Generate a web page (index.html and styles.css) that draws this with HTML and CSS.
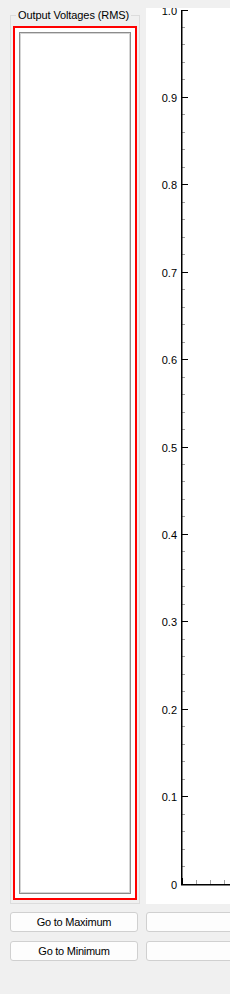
FILE: index.html
```html
<!DOCTYPE html>
<html lang="en">
  <head>
    <meta charset="UTF-8" />
    <meta name="viewport" content="width=device-width, initial-scale=1.0" />
    <title>Output Voltages</title>
    <link rel="stylesheet" href="styles.css">
  </head>
  <body>
    <div class="window">
      <div class="top">
        <fieldset class="group">
          <legend>Output Voltages (RMS)</legend>
          <div class="meter">
            <div class="meter-well"></div>
          </div>
        </fieldset>

        <div class="plot">
          <svg width="84" height="896" viewBox="0 0 84 896">
            <!-- minor ticks -->
            <path class="minor"
              d="M35 19.5h4M35 36.5h4M35 54.5h4M35 71.5h4
                 M35 106.5h4M35 124.5h4M35 141.5h4M35 159.5h4
                 M35 194.5h4M35 211.5h4M35 229.5h4M35 246.5h4
                 M35 281.5h4M35 299.5h4M35 316.5h4M35 334.5h4
                 M35 369.5h4M35 386.5h4M35 404.5h4M35 421.5h4
                 M35 456.5h4M35 473.5h4M35 491.5h4M35 508.5h4
                 M35 543.5h4M35 561.5h4M35 578.5h4M35 596.5h4
                 M35 631.5h4M35 648.5h4M35 666.5h4M35 683.5h4
                 M35 718.5h4M35 736.5h4M35 753.5h4M35 771.5h4
                 M35 806.5h4M35 823.5h4M35 841.5h4M35 858.5h4
                 M50.5 872v4M64.5 872v4M78.5 872v4" />
            <!-- major ticks -->
            <path class="major"
              d="M35 2.5h7M35 89.5h7M35 176.5h7M35 264.5h7M35 351.5h7
                 M35 439.5h7M35 526.5h7M35 613.5h7M35 701.5h7M35 788.5h7
                 M36.5 870v6" />
            <!-- axes -->
            <path class="axis" d="M35.75 2V877M35 876.75H84" />

            <g class="labels">
              <text x="31" y="6.5">1.0</text>
              <text x="31" y="93.5">0.9</text>
              <text x="31" y="180.5">0.8</text>
              <text x="31" y="268.5">0.7</text>
              <text x="31" y="355.5">0.6</text>
              <text x="31" y="443.5">0.5</text>
              <text x="31" y="530.5">0.4</text>
              <text x="31" y="617.5">0.3</text>
              <text x="31" y="705.5">0.2</text>
              <text x="31" y="792.5">0.1</text>
              <text x="31" y="880.5">0</text>
            </g>
          </svg>
        </div>
      </div>

      <div class="actions">
        <button class="btn">Go to Maximum</button>
        <button class="btn"></button>
        <button class="btn">Go to Minimum</button>
        <button class="btn"></button>
      </div>
    </div>
  </body>
</html>
```

FILE: styles.css
```css
body {
  margin: 0;
  background: #f0f0f0;
  font-family: "Liberation Sans", Arial, sans-serif;
  font-size: 11px;
  color: #000000;
  overflow: hidden;
}

.window {
  width: 230px;
  height: 994px;
  padding-left: 10px;
  box-sizing: border-box;
  overflow: hidden;
}

.top {
  display: flex;
  gap: 6px;
  margin-top: 8px;
  height: 896px;
}

.group {
  flex: 0 0 auto;
  width: 130px;
  box-sizing: border-box;
  margin: 0;
  padding: 4px 2px 3px 2px;
  border: 1px solid #dcdcdc;
  display: flex;
  flex-direction: column;
  min-width: 0;
}

.group legend {
  margin-left: 3px;
  padding: 0 2px;
  line-height: 14px;
  font-size: 11px;
  letter-spacing: -0.1px;
  white-space: nowrap;
}

.meter {
  flex: 1;
  border: 2px solid #ff0000;
  background: #ffffff;
  padding: 4px;
  display: flex;
}

.meter-well {
  flex: 1;
  border: 1px solid #8c8c8c;
  box-shadow: inset 1px 1px 0 #d4d4d4, inset -1px -1px 0 #d4d4d4;
}

.plot {
  flex: 1;
  background: #ffffff;
  overflow: hidden;
}

.plot svg {
  display: block;
}

.minor {
  stroke: #a0a0a0;
  stroke-width: 1;
  fill: none;
}

.major {
  stroke: #000000;
  stroke-width: 1;
  fill: none;
}

.axis {
  stroke: #000000;
  stroke-width: 1.5;
  fill: none;
}

.labels text {
  font-family: "Liberation Sans", Arial, sans-serif;
  font-size: 11px;
  fill: #000000;
  text-anchor: end;
}

.actions {
  display: grid;
  grid-template-columns: 128px 120px;
  grid-auto-rows: 20px;
  column-gap: 8px;
  row-gap: 9px;
  margin-top: 8px;
}

.btn {
  margin: 0;
  padding: 0;
  border: 1px solid #d0d0d0;
  border-radius: 3px;
  background: #fdfdfd;
  font-family: "Liberation Sans", Arial, sans-serif;
  font-size: 11px;
  letter-spacing: -0.25px;
  color: #000000;
}
```
